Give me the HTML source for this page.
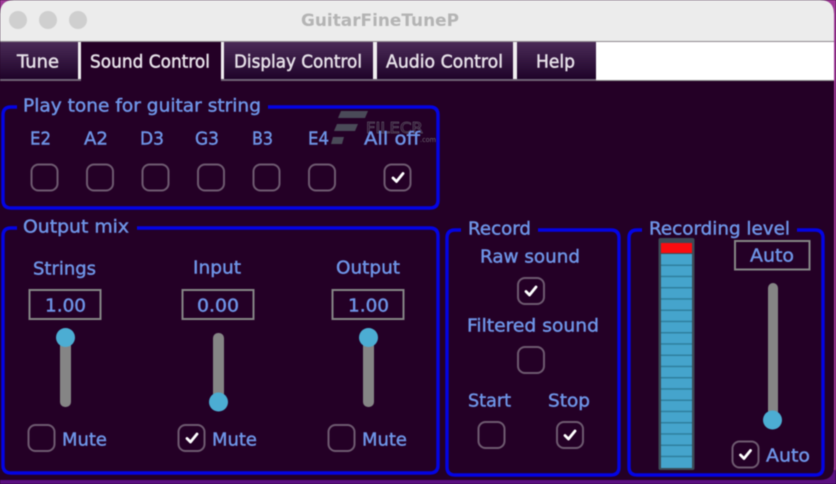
<!DOCTYPE html>
<html>
<head>
<meta charset="utf-8">
<style>
html,body{margin:0;padding:0;background:#240026;width:836px;height:484px;overflow:hidden}
svg{display:block;filter:blur(.6px)}
text{font-family:"DejaVu Sans","Liberation Sans",sans-serif}
.l{fill:#6e94e6;stroke:#6e94e6;stroke-width:.45;font-size:18px;transform:translateY(.5px)}
.t{fill:#e6e0e8;stroke:#e6e0e8;stroke-width:.5;font-size:18px;transform:translateY(.5px)}
.c{fill:none;stroke:#6e5a70;stroke-width:2}
.k{fill:none;stroke:#fff;stroke-width:2.8;stroke-linecap:round;stroke-linejoin:round}
.g{fill:none;stroke:#0404e4;stroke-width:3.4}
.b{fill:none;stroke:#858585;stroke-width:2}
.s{fill:#858585}
.n{fill:#4cadd3}
</style>
</head>
<body>
<svg width="836" height="484" viewBox="0 0 836 484" xmlns="http://www.w3.org/2000/svg">
<defs>
<linearGradient id="tab" x1="0" y1="0" x2="0" y2="1">
<stop offset="0" stop-color="#4b2c58"/>
<stop offset="1" stop-color="#1e0228"/>
</linearGradient>
</defs>

<!-- desktop behind window -->
<rect width="836" height="484" fill="#a03a98"/>
<rect x="0" y="470" width="836" height="14" fill="#5a0f80"/>

<!-- window -->
<path d="M14 0H820Q834 0 834 14V466Q834 480 820 480H0V14Q0 0 14 0Z" fill="#240026"/>
<path d="M14 0H820Q834 0 834 14V41H0V14Q0 0 14 0Z" fill="#ececec"/>
<circle cx="18" cy="20" r="9" fill="#cfcfcf"/>
<circle cx="48" cy="20" r="9" fill="#cfcfcf"/>
<circle cx="78" cy="20" r="9" fill="#cfcfcf"/>
<text x="301" y="26" textLength="158" lengthAdjust="spacingAndGlyphs" font-size="17" font-weight="bold" fill="#b4b4b4">GuitarFineTuneP</text>

<!-- tab bar -->
<rect x="596" y="41" width="238" height="39" fill="#fff"/>
<rect x="0" y="41" width="596" height="39" fill="#f0eef0"/>
<rect x="0" y="41" width="78" height="39" fill="url(#tab)"/>
<rect x="81" y="41" width="140" height="41" fill="#240026"/>
<rect x="224" y="41" width="149" height="39" fill="url(#tab)"/>
<rect x="377" y="41" width="136" height="39" fill="url(#tab)"/>
<rect x="517" y="41" width="79" height="39" fill="url(#tab)"/>
<rect x="0" y="79" width="81" height="2" fill="#6f6275"/>
<rect x="221" y="79" width="375" height="2" fill="#6f6275"/>
<rect x="596" y="80" width="238" height="1" fill="#8a8a8a"/>
<rect x="0" y="41" width="834" height="1" fill="#8f8a90"/>
<text class="t" x="17" y="67" textLength="42" lengthAdjust="spacingAndGlyphs">Tune</text>
<text class="t" x="90" y="67" textLength="120" lengthAdjust="spacingAndGlyphs">Sound Control</text>
<text class="t" x="234" y="67" textLength="128" lengthAdjust="spacingAndGlyphs">Display Control</text>
<text class="t" x="386" y="67" textLength="117" lengthAdjust="spacingAndGlyphs">Audio Control</text>
<text class="t" x="536" y="67" textLength="39" lengthAdjust="spacingAndGlyphs">Help</text>

<!-- watermark -->
<g fill="#4a4a58">
<path d="M341 111H368L365 118H338Z"/>
<path d="M337 124H358L355 131H334Z"/>
<path d="M333 137H344L342 144H331Z"/>
</g>
<text x="366" y="133" textLength="57" lengthAdjust="spacingAndGlyphs" font-size="15" fill="none" stroke="#5c5464" stroke-width=".7">FILECR</text>
<text x="420" y="142" textLength="16" lengthAdjust="spacingAndGlyphs" font-size="7" fill="#6a6270">.com</text>

<!-- group: play tone -->
<path class="g" d="M17 107H11Q3 107 3 115V200Q3 208 11 208H430Q438 208 438 200V115Q438 107 430 107H268"/>
<text class="l" x="23" y="111" textLength="238" lengthAdjust="spacingAndGlyphs">Play tone for guitar string</text>
<text class="l" x="30" y="144" textLength="21" lengthAdjust="spacingAndGlyphs">E2</text>
<text class="l" x="84" y="144" textLength="24" lengthAdjust="spacingAndGlyphs">A2</text>
<text class="l" x="140" y="144" textLength="24" lengthAdjust="spacingAndGlyphs">D3</text>
<text class="l" x="195" y="144" textLength="24" lengthAdjust="spacingAndGlyphs">G3</text>
<text class="l" x="252" y="144" textLength="21" lengthAdjust="spacingAndGlyphs">B3</text>
<text class="l" x="308" y="144" textLength="21" lengthAdjust="spacingAndGlyphs">E4</text>
<text class="l" x="364" y="144" textLength="56" lengthAdjust="spacingAndGlyphs">All off</text>
<rect class="c" x="31.500" y="164.500" width="26" height="26" rx="7"/>
<rect class="c" x="87" y="164.500" width="26" height="26" rx="7"/>
<rect class="c" x="142.500" y="164.500" width="26" height="26" rx="7"/>
<rect class="c" x="198" y="164.500" width="26" height="26" rx="7"/>
<rect class="c" x="253.500" y="164.500" width="26" height="26" rx="7"/>
<rect class="c" x="309" y="164.500" width="26" height="26" rx="7"/>
<rect class="c" x="384.500" y="164.500" width="26" height="26" rx="7"/>
<path class="k" d="M393 178L396.500 181.500L403 173.500"/>

<!-- group: output mix -->
<path class="g" d="M17 228H11Q3 228 3 236V465Q3 473 11 473H430Q438 473 438 465V236Q438 228 430 228H137"/>
<text class="l" x="23" y="232" textLength="106" lengthAdjust="spacingAndGlyphs">Output mix</text>
<text class="l" x="33" y="274" textLength="63" lengthAdjust="spacingAndGlyphs">Strings</text>
<text class="l" x="193" y="273" textLength="48" lengthAdjust="spacingAndGlyphs">Input</text>
<text class="l" x="336" y="273" textLength="64" lengthAdjust="spacingAndGlyphs">Output</text>
<rect class="b" x="29.500" y="290" width="71" height="29"/>
<rect class="b" x="182.500" y="290" width="71" height="29"/>
<rect class="b" x="332.500" y="290" width="71" height="29"/>
<text class="l" x="45" y="311" textLength="41" lengthAdjust="spacingAndGlyphs">1.00</text>
<text class="l" x="197" y="311" textLength="42" lengthAdjust="spacingAndGlyphs">0.00</text>
<text class="l" x="348" y="311" textLength="41" lengthAdjust="spacingAndGlyphs">1.00</text>
<rect class="s" x="60" y="335" width="11" height="72" rx="5"/>
<rect class="s" x="213" y="333" width="11" height="74" rx="5"/>
<rect class="s" x="363" y="335" width="11" height="72" rx="5"/>
<circle class="n" cx="65.500" cy="337.500" r="9.500"/>
<circle class="n" cx="218.500" cy="402" r="9.500"/>
<circle class="n" cx="368.500" cy="337.500" r="9.500"/>
<rect class="c" x="28.500" y="425" width="26" height="26" rx="7"/>
<rect class="c" x="178.500" y="425" width="26" height="26" rx="7"/>
<rect class="c" x="328.500" y="425" width="26" height="26" rx="7"/>
<path class="k" d="M187 438.500L190.500 442L197 434"/>
<text class="l" x="62" y="445" textLength="45" lengthAdjust="spacingAndGlyphs">Mute</text>
<text class="l" x="212" y="445" textLength="45" lengthAdjust="spacingAndGlyphs">Mute</text>
<text class="l" x="362" y="445" textLength="45" lengthAdjust="spacingAndGlyphs">Mute</text>

<!-- group: record -->
<path class="g" d="M461 230H455Q447 230 447 238V467Q447 475 455 475H611Q619 475 619 467V238Q619 230 611 230H538"/>
<text class="l" x="468" y="234" textLength="63" lengthAdjust="spacingAndGlyphs">Record</text>
<text class="l" x="480" y="262" textLength="100" lengthAdjust="spacingAndGlyphs">Raw sound</text>
<rect class="c" x="518" y="278" width="26" height="26" rx="7"/>
<path class="k" d="M526 291.500L529.500 295L536 287"/>
<text class="l" x="467" y="331" textLength="132" lengthAdjust="spacingAndGlyphs">Filtered sound</text>
<rect class="c" x="518" y="347" width="26" height="26" rx="7"/>
<text class="l" x="468" y="406" textLength="43" lengthAdjust="spacingAndGlyphs">Start</text>
<text class="l" x="548" y="406" textLength="42" lengthAdjust="spacingAndGlyphs">Stop</text>
<rect class="c" x="478.500" y="422" width="26" height="26" rx="7"/>
<rect class="c" x="557" y="422" width="26" height="26" rx="7"/>
<path class="k" d="M565 435.500L568.500 439L575 431"/>

<!-- group: recording level -->
<path class="g" d="M642 230H637Q629 230 629 238V467Q629 475 637 475H815Q823 475 823 467V238Q823 230 815 230H797"/>
<text class="l" x="649" y="234" textLength="141" lengthAdjust="spacingAndGlyphs">Recording level</text>

<!-- meter -->
<rect x="658.500" y="238" width="36" height="232" rx="2" fill="#3c4a56"/>
<rect x="661" y="243" width="31" height="10" fill="#fa0c10"/>
<rect x="661" y="254" width="31" height="214" fill="#45a4cc"/>
<g fill="#2e7f9e">
<rect x="661" y="264.500" width="31" height="1.500"/>
<rect x="661" y="275.700" width="31" height="1.500"/>
<rect x="661" y="287" width="31" height="1.500"/>
<rect x="661" y="298.200" width="31" height="1.500"/>
<rect x="661" y="309.500" width="31" height="1.500"/>
<rect x="661" y="320.700" width="31" height="1.500"/>
<rect x="661" y="332" width="31" height="1.500"/>
<rect x="661" y="343.200" width="31" height="1.500"/>
<rect x="661" y="354.500" width="31" height="1.500"/>
<rect x="661" y="365.700" width="31" height="1.500"/>
<rect x="661" y="377" width="31" height="1.500"/>
<rect x="661" y="388.200" width="31" height="1.500"/>
<rect x="661" y="399.500" width="31" height="1.500"/>
<rect x="661" y="410.700" width="31" height="1.500"/>
<rect x="661" y="422" width="31" height="1.500"/>
<rect x="661" y="433.200" width="31" height="1.500"/>
<rect x="661" y="444.500" width="31" height="1.500"/>
<rect x="661" y="455.700" width="31" height="1.500"/>
</g>

<rect class="b" x="735" y="241" width="74.500" height="28.500"/>
<text class="l" x="750" y="261" textLength="44" lengthAdjust="spacingAndGlyphs">Auto</text>
<rect class="s" x="768" y="283" width="10" height="142" rx="5"/>
<circle class="n" cx="772.500" cy="420" r="9.500"/>
<rect class="c" x="732.500" y="441.500" width="26" height="26" rx="7"/>
<path class="k" d="M740.500 455L744 458.500L750.500 450.500"/>
<text class="l" x="766" y="461" textLength="44" lengthAdjust="spacingAndGlyphs">Auto</text>
</svg>
</body>
</html>
